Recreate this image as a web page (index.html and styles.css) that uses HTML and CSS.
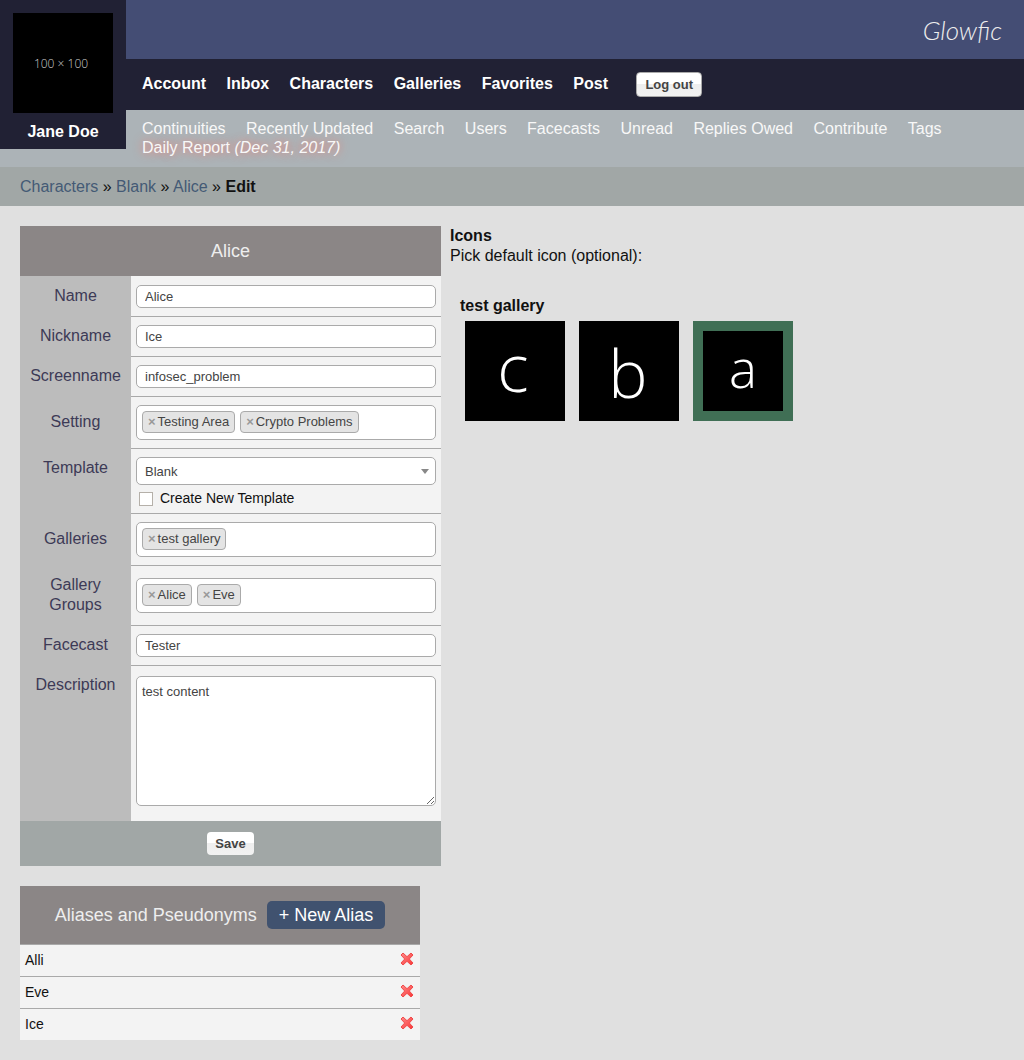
FILE: index.html
```html
<!DOCTYPE html>
<html lang="en">
<head>
<meta charset="utf-8">
<meta name="viewport" content="width=device-width, initial-scale=1">
<title>Edit Character: Alice</title>
<link rel="stylesheet" href="styles.css">
</head>
<body>
<svg class="defs" aria-hidden="true">
  <defs>
    <linearGradient id="cross-fill" x1="0" y1="0" x2="1" y2="1">
      <stop offset="0" stop-color="#ff8a8a"/>
      <stop offset="1" stop-color="#f93636"/>
    </linearGradient>
    <symbol id="cross" viewBox="0 0 14 14">
      <path d="M3 1 L7 4.700 L11 1 L13 3 L9.300 7 L13 11 L11 13 L7 9.300 L3 13 L1 11 L4.700 7 L1 3 Z" fill="url(#cross-fill)" stroke="#f04a4a" stroke-linejoin="round"/>
    </symbol>
  </defs>
</svg>
<header class="header">
  <div class="user">
    <a href="#" class="user-icon"><svg width="100" height="100" viewBox="0 0 100 100" role="img" aria-label="Icon"><rect width="100" height="100"/><text class="icon-size" x="48" y="55">100 × 100</text></svg></a>
    <a href="#" class="user-name">Jane Doe</a>
  </div>
  <div class="bars">
    <div class="brand"><a href="#" class="logo">Glowfic</a></div>
    <nav class="nav" aria-label="Account">
      <a href="#">Account</a>
      <a href="#">Inbox</a>
      <a href="#">Characters</a>
      <a href="#">Galleries</a>
      <a href="#">Favorites</a>
      <a href="#">Post</a>
      <button type="button" class="button logout">Log out</button>
    </nav>
    <nav class="subnav" aria-label="Site">
      <a href="#">Continuities</a>
      <a href="#">Recently Updated</a>
      <a href="#">Search</a>
      <a href="#">Users</a>
      <a href="#">Facecasts</a>
      <a href="#">Unread</a>
      <a href="#">Replies Owed</a>
      <a href="#">Contribute</a>
      <a href="#">Tags</a>
      <a href="#" class="report">Daily Report <em>(Dec 31, 2017)</em></a>
    </nav>
  </div>
</header>
<nav class="crumbs" aria-label="Breadcrumb"><a href="#">Characters</a> » <a href="#">Blank</a> » <a href="#">Alice</a> » <b>Edit</b></nav>
<main class="content">
  <div class="left">
    <form>
      <table class="editor">
        <colgroup><col class="label-col"><col></colgroup>
        <thead><tr><th colspan="2" class="title">Alice</th></tr></thead>
        <tbody>
          <tr><th><label for="name">Name</label></th><td><input class="text" id="name" type="text" value="Alice"></td></tr>
          <tr><th><label for="nickname">Nickname</label></th><td><input class="text" id="nickname" type="text" value="Ice"></td></tr>
          <tr><th><label for="screenname">Screenname</label></th><td><input class="text" id="screenname" type="text" value="infosec_problem"></td></tr>
          <tr><th><label for="setting">Setting</label></th><td>
            <div class="tags">
              <span class="tag"><button type="button" aria-label="Remove Testing Area">×</button>Testing Area</span>
              <span class="tag"><button type="button" aria-label="Remove Crypto Problems">×</button>Crypto Problems</span>
              <input id="setting" type="text">
            </div></td></tr>
          <tr class="top"><th><label for="template">Template</label></th><td>
            <div class="select"><select id="template"><option>Blank</option></select></div>
            <div class="check"><input id="new-template" type="checkbox"><label for="new-template">Create New Template</label></div></td></tr>
          <tr><th><label for="galleries">Galleries</label></th><td>
            <div class="tags">
              <span class="tag"><button type="button" aria-label="Remove test gallery">×</button>test gallery</span>
              <input id="galleries" type="text">
            </div></td></tr>
          <tr><th><label for="groups">Gallery Groups</label></th><td>
            <div class="tags">
              <span class="tag"><button type="button" aria-label="Remove Alice">×</button>Alice</span>
              <span class="tag"><button type="button" aria-label="Remove Eve">×</button>Eve</span>
              <input id="groups" type="text">
            </div></td></tr>
          <tr><th><label for="facecast">Facecast</label></th><td><input class="text" id="facecast" type="text" value="Tester"></td></tr>
          <tr class="top"><th><label for="description">Description</label></th><td class="area"><textarea id="description">test content</textarea></td></tr>
        </tbody>
        <tfoot><tr><td colspan="2" class="submit"><button type="submit" class="button">Save</button></td></tr></tfoot>
      </table>
    </form>
    <table class="aliases">
      <thead><tr><th colspan="2">Aliases and Pseudonyms <a href="#" class="new-alias">+ New Alias</a></th></tr></thead>
      <tbody>
        <tr><td>Alli</td><td class="remove"><button type="button" aria-label="Delete Alli"><svg width="14" height="14"><use href="#cross"/></svg></button></td></tr>
        <tr><td>Eve</td><td class="remove"><button type="button" aria-label="Delete Eve"><svg width="14" height="14"><use href="#cross"/></svg></button></td></tr>
        <tr><td>Ice</td><td class="remove"><button type="button" aria-label="Delete Ice"><svg width="14" height="14"><use href="#cross"/></svg></button></td></tr>
      </tbody>
    </table>
  </div>
  <section class="icons">
    <b>Icons</b>
    <p>Pick default icon (optional):</p>
    <div class="gallery">
      <b>test gallery</b>
      <div class="gallery-icons">
        <button type="button" aria-label="Icon c"><svg viewBox="0 0 100 100"><rect width="100" height="100"/><text x="48" y="71">c</text></svg></button>
        <button type="button" aria-label="Icon b"><svg viewBox="0 0 100 100"><rect width="100" height="100"/><text x="49" y="77">b</text></svg></button>
        <button type="button" class="selected" aria-label="Icon a, selected"><svg viewBox="0 0 100 100"><rect width="100" height="100"/><text x="50" y="71">a</text></svg></button>
      </div>
    </div>
  </section>
</main>
</body>
</html>
```
FILE: styles.css
```css
* { box-sizing: border-box; }

body {
  margin: 0;
  background: #e0e0e0;
  color: #111;
  font: 16px/20px "Liberation Sans", Arial, sans-serif;
}

a { text-decoration: none; }
button { font-family: inherit; cursor: pointer; }
.defs { position: absolute; width: 0; height: 0; }

/* Header */
.header {
  display: flex;
  align-items: flex-start;
  background: #acb3b7;
}
.user {
  flex: none;
  display: flex;
  flex-direction: column;
  align-items: center;
  gap: 9px;
  padding: 13px 13px 7px;
  background: #212134;
}
.user-icon, .user-icon svg { display: block; }
.icon-size {
  fill: #ccc;
  font: 300 12px "Open Sans", sans-serif;
  text-anchor: middle;
}
.user-name { color: #fff; font-weight: bold; }
.bars { flex: 1; }
.brand {
  display: flex;
  justify-content: flex-end;
  align-items: center;
  height: 59px;
  padding: 0 22px;
  background: #444d74;
}
.logo {
  color: #eee;
  font: italic 300 26px/32px Lato, cursive;
}
.nav {
  padding: 13px 16px 15px;
  background: #212134;
  line-height: 23px;
}
.nav a {
  margin-right: 16px;
  color: #fff;
  font-weight: bold;
}
.subnav {
  padding: 9px 16px 10px;
  line-height: 19px;
}
.subnav a {
  display: inline-block;
  margin-right: 16px;
  color: #f8f8f8;
}
.subnav .report { text-shadow: 0 0 10px #ff7468; }
.crumbs {
  padding: 10px 20px 9px;
  background: #a1a7a6;
}
.crumbs a { color: #445a75; }

.button {
  padding: 0 8px;
  height: 23px;
  border: 0;
  border-radius: 4px;
  background: linear-gradient(#fff 50%, #eee 50%, #f2f2f2);
  color: #444;
  font-size: 13px;
  font-weight: bold;
  line-height: 23px;
}
.logout {
  height: 25px;
  margin: 0 0 -2px 8px;
  border: 1px solid #aaa;
  vertical-align: top;
}

/* Page body */
.content {
  display: flex;
  align-items: flex-start;
  gap: 9px;
  padding: 20px;
}
.left { flex: none; }
table { border-collapse: separate; border-spacing: 0; table-layout: fixed; }
th { font-weight: normal; }

.editor { width: 421px; }
.label-col { width: 111px; }
.editor .title {
  height: 50px;
  padding: 0;
  background: #8b8686;
  color: #eee;
  font-size: 18px;
}
.editor tbody th {
  padding: 10px;
  background: #bcbcbc;
  color: #3d3a56;
}
.editor tbody td {
  padding: 8px 5px;
  border-top: 1px solid #a9a9a9;
  background: #f3f3f3;
}
.editor tbody tr:first-child td { border-color: #f3f3f3; }
.editor tbody .top > * { vertical-align: top; }
.editor tbody .area { padding: 10px 5px 15px; }

.text, .tags, select, textarea {
  display: block;
  width: 100%;
  border: 1px solid #aaa;
  border-radius: 5px;
  background: #fff;
  color: #444;
  font: 13px/20px "Liberation Sans", Arial, sans-serif;
}
.text { height: 23px; padding: 0 8px; }
.tags {
  display: flex;
  gap: 5px;
  height: 35px;
  padding: 5px;
}
.tag {
  display: flex;
  height: 22px;
  padding: 0 5px;
  border: 1px solid #aaa;
  border-radius: 4px;
  background: #e4e4e4;
  white-space: nowrap;
}
.tag button {
  margin-right: 2px;
  padding: 0;
  border: 0;
  background: none;
  color: #999;
  font-size: 13px;
  font-weight: bold;
  line-height: 18px;
}
.tags input {
  flex: 1;
  min-width: 0;
  padding: 0;
  border: 0;
  background: none;
  font: inherit;
}
.select { position: relative; }
.select::after {
  content: "";
  position: absolute;
  top: 12px;
  right: 7px;
  border: 4px solid transparent;
  border-top: 5px solid #888;
  border-bottom: 0;
  pointer-events: none;
}
select {
  height: 28px;
  padding: 2px 8px 0;
  appearance: none;
}
.check {
  display: flex;
  align-items: center;
  gap: 7px;
  margin-top: 3px;
  padding-left: 3px;
  font-size: 14px;
  line-height: 20px;
}
.editor .check { margin-bottom: -3px; }
.check input {
  appearance: none;
  width: 14px;
  height: 14px;
  margin: 2px 0 0;
  border: 1px solid #b5b0a9;
  background: #fff;
}
textarea {
  height: 130px;
  padding: 5px;
  resize: vertical;
}
.submit {
  height: 45px;
  padding: 0;
  background: #a1a7a6;
  text-align: center;
}

.aliases {
  width: 400px;
  margin-top: 20px;
  font-size: 14px;
}
.aliases th {
  height: 58px;
  padding: 0;
  background: #8b8686;
  color: #eee;
  font-size: 18px;
}
.new-alias {
  display: inline-block;
  margin-left: 5px;
  padding: 0 12px;
  border-radius: 5px;
  background: #40526f;
  color: #fff;
  line-height: 28px;
}
.aliases td {
  height: 32px;
  padding: 0 5px 2px;
  border-top: 1px solid #a9a9a9;
  background: #f3f3f3;
}
.aliases .remove { text-align: right; }
.remove button {
  display: inline-block;
  padding: 0 1px 4px;
  border: 0;
  background: none;
  vertical-align: middle;
}
.remove svg { display: block; }

/* Icon picker */
.icons { flex: 1; }
.icons p { margin: 0; }
.gallery { margin-top: 30px; padding-left: 10px; }
.gallery-icons {
  display: flex;
  flex-wrap: wrap;
  gap: 14px;
  margin-top: 5px;
  padding-left: 5px;
}
.gallery-icons button {
  width: 100px;
  height: 100px;
  padding: 0;
  border: 0;
  background: #000;
}
.gallery-icons .selected { border: 10px solid #406f55; }
.gallery-icons svg { display: block; width: 100%; }
.gallery-icons text {
  fill: #fff;
  font: 300 66px "Open Sans", sans-serif;
  text-anchor: middle;
}
```
